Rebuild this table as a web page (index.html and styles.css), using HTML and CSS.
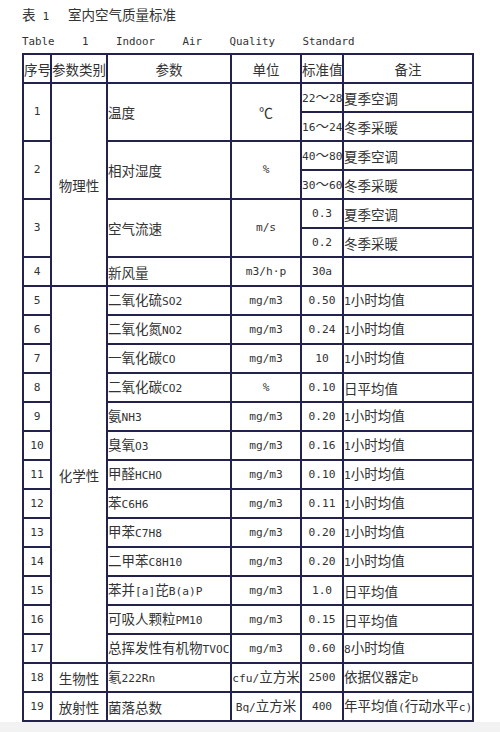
FILE: index.html
```html
<!DOCTYPE html>
<html lang="zh">
<head>
<meta charset="utf-8">
<link rel="stylesheet" href="styles.css">
</head>
<body>
<div class="page">
  <div class="title"><span class="t-label">表<span class="en t-num">1</span></span><span>室内空气质量标准</span></div>
  <div class="subtitle"><span>Table</span><span>1</span><span>Indoor</span><span>Air</span><span>Quality</span><span>Standard</span></div>
  <table class="aq">
    <colgroup>
      <col class="c1"><col class="c2"><col class="c3"><col class="c4"><col class="c5"><col class="c6">
    </colgroup>
    <thead>
      <tr class="head">
        <th>序号</th><th>参数类别</th><th>参数</th><th>单位</th><th>标准值</th><th>备注</th>
      </tr>
    </thead>
    <tbody>
      <tr><td class="n" rowspan="2">1</td><td class="cat" rowspan="7">物理性</td><td class="p" rowspan="2">温度</td><td class="u deg" rowspan="2">℃</td><td class="v">22<span class="cj">～</span>28</td><td class="r">夏季空调</td></tr>
      <tr><td class="v">16<span class="cj">～</span>24</td><td class="r">冬季采暖</td></tr>
      <tr><td class="n" rowspan="2">2</td><td class="p" rowspan="2">相对湿度</td><td class="u" rowspan="2">%</td><td class="v">40<span class="cj">～</span>80</td><td class="r">夏季空调</td></tr>
      <tr><td class="v">30<span class="cj">～</span>60</td><td class="r">冬季采暖</td></tr>
      <tr><td class="n" rowspan="2">3</td><td class="p" rowspan="2">空气流速</td><td class="u" rowspan="2">m/s</td><td class="v">0.3</td><td class="r">夏季空调</td></tr>
      <tr><td class="v">0.2</td><td class="r">冬季采暖</td></tr>
      <tr><td class="n">4</td><td class="p">新风量</td><td class="u">m3/h·p</td><td class="v">30a</td><td class="r"></td></tr>
      <tr><td class="n">5</td><td class="cat" rowspan="13">化学性</td><td class="p">二氧化硫<span class="en">SO2</span></td><td class="u">mg/m3</td><td class="v">0.50</td><td class="r"><span class="en">1</span>小时均值</td></tr>
      <tr><td class="n">6</td><td class="p">二氧化氮<span class="en">NO2</span></td><td class="u">mg/m3</td><td class="v">0.24</td><td class="r"><span class="en">1</span>小时均值</td></tr>
      <tr><td class="n">7</td><td class="p">一氧化碳<span class="en">CO</span></td><td class="u">mg/m3</td><td class="v">10</td><td class="r"><span class="en">1</span>小时均值</td></tr>
      <tr><td class="n">8</td><td class="p">二氧化碳<span class="en">CO2</span></td><td class="u">%</td><td class="v">0.10</td><td class="r">日平均值</td></tr>
      <tr><td class="n">9</td><td class="p">氨<span class="en">NH3</span></td><td class="u">mg/m3</td><td class="v">0.20</td><td class="r"><span class="en">1</span>小时均值</td></tr>
      <tr><td class="n">10</td><td class="p">臭氧<span class="en">O3</span></td><td class="u">mg/m3</td><td class="v">0.16</td><td class="r"><span class="en">1</span>小时均值</td></tr>
      <tr><td class="n">11</td><td class="p">甲醛<span class="en">HCHO</span></td><td class="u">mg/m3</td><td class="v">0.10</td><td class="r"><span class="en">1</span>小时均值</td></tr>
      <tr><td class="n">12</td><td class="p">苯<span class="en">C6H6</span></td><td class="u">mg/m3</td><td class="v">0.11</td><td class="r"><span class="en">1</span>小时均值</td></tr>
      <tr><td class="n">13</td><td class="p">甲苯<span class="en">C7H8</span></td><td class="u">mg/m3</td><td class="v">0.20</td><td class="r"><span class="en">1</span>小时均值</td></tr>
      <tr><td class="n">14</td><td class="p">二甲苯<span class="en">C8H10</span></td><td class="u">mg/m3</td><td class="v">0.20</td><td class="r"><span class="en">1</span>小时均值</td></tr>
      <tr><td class="n">15</td><td class="p">苯并<span class="en">[a]</span>芘<span class="en">B(a)P</span></td><td class="u">mg/m3</td><td class="v">1.0</td><td class="r">日平均值</td></tr>
      <tr><td class="n">16</td><td class="p">可吸人颗粒<span class="en">PM10</span></td><td class="u">mg/m3</td><td class="v">0.15</td><td class="r">日平均值</td></tr>
      <tr><td class="n">17</td><td class="p">总挥发性有机物<span class="en">TVOC</span></td><td class="u">mg/m3</td><td class="v">0.60</td><td class="r"><span class="en">8</span>小时均值</td></tr>
      <tr><td class="n">18</td><td class="cat">生物性</td><td class="p">氡<span class="en">222Rn</span></td><td class="u mix"><span class="en">cfu/</span>立方米</td><td class="v">2500</td><td class="r">依据仪器定<span class="en">b</span></td></tr>
      <tr><td class="n">19</td><td class="cat">放射性</td><td class="p">菌落总数</td><td class="u mix"><span class="en">Bq/</span>立方米</td><td class="v">400</td><td class="r">年平均值<span class="en">(</span>行动水平<span class="en">c)</span></td></tr>
    </tbody>
  </table>
</div>
</body>
</html>
```

FILE: styles.css
```css
html, body {
  margin: 0;
  padding: 0;
  background: #f2f2f2;
}

.page {
  background: #ffffff;
  height: 722px;
  box-sizing: border-box;
  padding: 4px 0 0 22px;
  color: #333333;
  font-family: "Noto Sans CJK SC", sans-serif;
  font-size: 13.5px;
}

.en {
  font-family: "DejaVu Sans Mono", monospace;
  font-size: 11.2px;
}

.cj {
  font-family: "Noto Sans CJK SC", sans-serif;
  font-size: 13.5px;
}

.title {
  line-height: 20px;
  height: 20px;
  display: flex;
  white-space: nowrap;
}

.t-label {
  width: 46px;
}

.t-num {
  margin-left: 7px;
}

.subtitle {
  margin-top: 10px;
  height: 16px;
  line-height: 16px;
  display: flex;
  gap: 27.5px;
  font-family: "DejaVu Sans Mono", monospace;
  font-size: 10.8px;
  white-space: nowrap;
}

.aq {
  margin-top: 3px;
  border-collapse: collapse;
  table-layout: fixed;
  width: 452px;
  border: 2px solid #22224c;
}

.c1 { width: 28px; }
.c2 { width: 56px; }
.c3 { width: 124px; }
.c4 { width: 70px; }
.c5 { width: 42px; }
.c6 { width: 130px; }

.aq th,
.aq td {
  border: 2px solid #22224c;
  padding: 0;
  height: 27px;
  line-height: 16px;
  font-weight: normal;
  white-space: nowrap;
  overflow: hidden;
  vertical-align: middle;
}

.aq .head th {
  height: 27px;
  text-align: center;
}

.n, .v, .u {
  text-align: center;
  font-family: "DejaVu Sans Mono", "Noto Sans CJK SC", monospace;
  font-size: 11.2px;
}

.aq .mix {
  font-family: "Noto Sans CJK SC", sans-serif;
  font-size: 13.5px;
}

.aq .deg {
  font-family: "Noto Sans CJK SC", sans-serif;
  font-size: 14px;
}

.cat {
  text-align: center;
}

.p, .r {
  text-align: left;
}
```
